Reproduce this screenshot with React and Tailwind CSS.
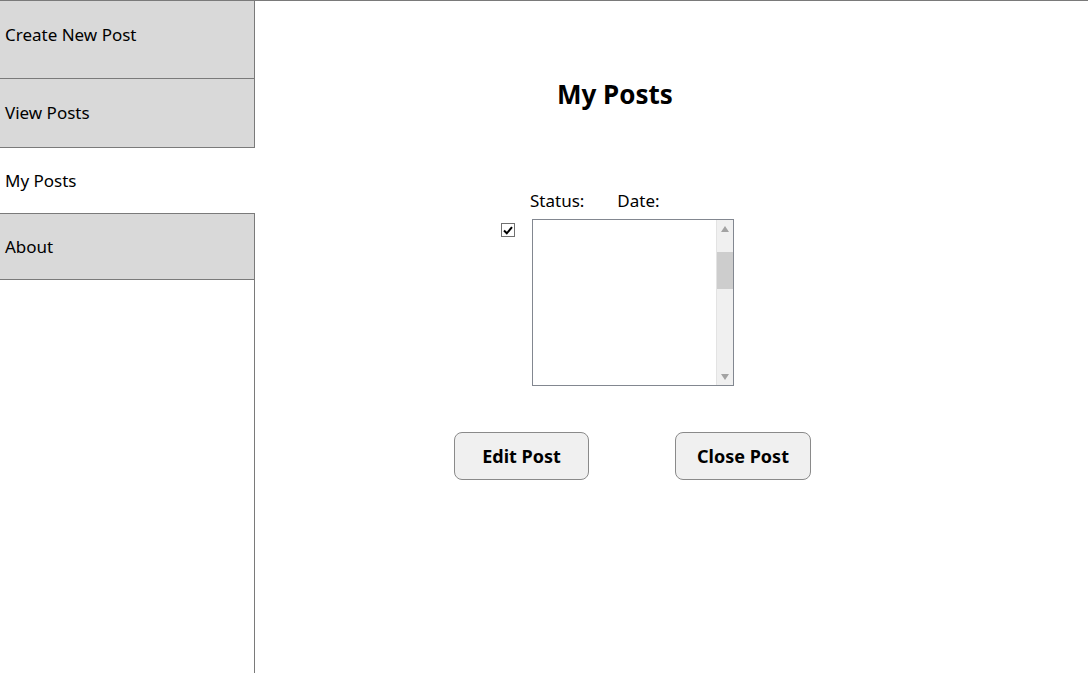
import React from 'react';

const navItems = [
  { label: 'Create New Post', h: 'h-[78px] pb-[10px]', active: false },
  { label: 'View Posts', h: 'h-[69px]', active: false },
  { label: 'My Posts', h: 'h-[66px]', active: true },
  { label: 'About', h: 'h-[66px]', active: false },
];

// left side navigation
const Sidebar = () => (
  <div className="flex w-[255px] shrink-0 flex-col">
    {navItems.map((item) => (
      <div
        key={item.label}
        className={
          item.active
            ? `${item.h} flex items-center pl-[5px] bg-white border-b border-[#7a7a7a]`
            : `${item.h} flex items-center pl-[5px] bg-[#d9d9d9] border-b border-r border-[#7a7a7a]`
        }
      >
        <span className="text-[17px] text-black">{item.label}</span>
      </div>
    ))}
    <div className="flex-1 border-r border-[#7a7a7a]" />
  </div>
);

// fake windows listbox with a scrollbar
const ListBox = () => (
  <div className="flex h-[167px] w-[202px] border border-[#828790] bg-white">
    <div className="flex-1" />
    <div className="flex w-[17px] flex-col bg-[#f0f0f0] border-l border-[#e3e3e3]">
      <div className="flex h-[17px] items-center justify-center">
        <svg width="8" height="6" viewBox="0 0 8 6">
          <path d="M0 6 L4 0 L8 6 Z" fill="#a3a3a3" />
        </svg>
      </div>
      <div className="h-[15px]" />
      <div className="h-[37px] bg-[#cdcdcd]" />
      <div className="flex-1" />
      <div className="flex h-[17px] items-center justify-center">
        <svg width="8" height="6" viewBox="0 0 8 6">
          <path d="M0 0 L8 0 L4 6 Z" fill="#a3a3a3" />
        </svg>
      </div>
    </div>
  </div>
);

const App = () => {
  return (
    <div
      className="flex h-[673px] w-[1088px] overflow-hidden border-t border-[#7a7a7a] bg-white text-black"
      style={{ fontFamily: '"Noto Sans", "Open Sans", sans-serif' }}
    >
      <Sidebar />

      {/* main content */}
      <div className="flex flex-1 flex-col">
        <h1 className="mt-[74px] ml-[302px] text-[26px] font-bold leading-[38px]">My Posts</h1>

        <div className="mt-[76px] ml-[275px] flex gap-[33px] text-[17px] leading-[24px]">
          <span>Status:</span>
          <span>Date:</span>
        </div>

        <div className="mt-[6px] ml-[246px] flex items-start">
          <div className="mt-[4px] flex h-[14px] w-[14px] items-center justify-center border border-[#707070] bg-white">
            <svg width="10" height="9" viewBox="0 0 10 9">
              <path d="M1 4.5 L3.8 7.3 L9 1.2" stroke="#000" strokeWidth="2" fill="none" />
            </svg>
          </div>
          <div className="ml-[17px]">
            <ListBox />
          </div>
        </div>

        <div className="mt-[46px] ml-[199px] flex gap-[86px]">
          <button className="h-[48px] w-[135px] rounded-[8px] border border-[#8a8a8a] bg-[#f0f0f0] text-[18px] font-bold">
            Edit Post
          </button>
          <button className="h-[48px] w-[136px] rounded-[8px] border border-[#8a8a8a] bg-[#f0f0f0] text-[18px] font-bold">
            Close Post
          </button>
        </div>
      </div>
    </div>
  );
};

export default App;
